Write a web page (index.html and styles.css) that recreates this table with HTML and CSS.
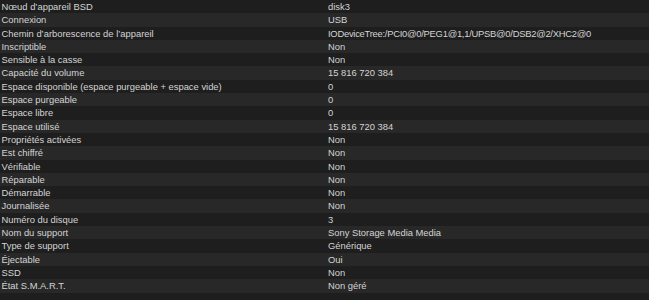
FILE: index.html
```html
<!DOCTYPE html>
<html lang="fr">
<head>
<meta charset="utf-8">
<link rel="stylesheet" href="styles.css">
</head>
<body>
<div class="table">
  <div class="row"><span class="k">Nœud d’appareil BSD</span><span class="v">disk3</span></div>
  <div class="row"><span class="k">Connexion</span><span class="v">USB</span></div>
  <div class="row"><span class="k">Chemin d’arborescence de l’appareil</span><span class="v v-path">IODeviceTree:/PCI0@0/PEG1@1,1/UPSB@0/DSB2@2/XHC2@0</span></div>
  <div class="row"><span class="k">Inscriptible</span><span class="v">Non</span></div>
  <div class="row"><span class="k">Sensible à la casse</span><span class="v">Non</span></div>
  <div class="row"><span class="k">Capacité du volume</span><span class="v">15 816 720 384</span></div>
  <div class="row"><span class="k">Espace disponible (espace purgeable + espace vide)</span><span class="v">0</span></div>
  <div class="row"><span class="k">Espace purgeable</span><span class="v">0</span></div>
  <div class="row"><span class="k">Espace libre</span><span class="v">0</span></div>
  <div class="row"><span class="k">Espace utilisé</span><span class="v">15 816 720 384</span></div>
  <div class="row"><span class="k">Propriétés activées</span><span class="v">Non</span></div>
  <div class="row"><span class="k">Est chiffré</span><span class="v">Non</span></div>
  <div class="row"><span class="k">Vérifiable</span><span class="v">Non</span></div>
  <div class="row"><span class="k">Réparable</span><span class="v">Non</span></div>
  <div class="row"><span class="k">Démarrable</span><span class="v">Non</span></div>
  <div class="row"><span class="k">Journalisée</span><span class="v">Non</span></div>
  <div class="row"><span class="k">Numéro du disque</span><span class="v">3</span></div>
  <div class="row"><span class="k">Nom du support</span><span class="v">Sony Storage Media Media</span></div>
  <div class="row"><span class="k">Type de support</span><span class="v">Générique</span></div>
  <div class="row"><span class="k">Éjectable</span><span class="v">Oui</span></div>
  <div class="row"><span class="k">SSD</span><span class="v">Non</span></div>
  <div class="row"><span class="k">État S.M.A.R.T.</span><span class="v">Non géré</span></div>
  <div class="row"><span class="k"></span><span class="v"></span></div>
</div>
</body>
</html>
```
FILE: styles.css
```css
html, body {
  margin: 0;
  padding: 0;
  background: #1e1e1e;
  overflow: hidden;
}
.table {
  display: flex;
  flex-direction: column;
  font-family: "Liberation Sans", Arial, sans-serif;
  font-size: 9.4px;
  color: #d4d4d4;
}
.row {
  display: grid;
  grid-template-columns: 328px 1fr;
  height: 13.3px;
  line-height: 13.3px;
  white-space: nowrap;
}
.row:nth-child(even) {
  background: #282828;
}
.k {
  padding-left: 1.5px;
  overflow: hidden;
}
.v {
  overflow: hidden;
}
.v-path {
  letter-spacing: -0.25px;
}
```
